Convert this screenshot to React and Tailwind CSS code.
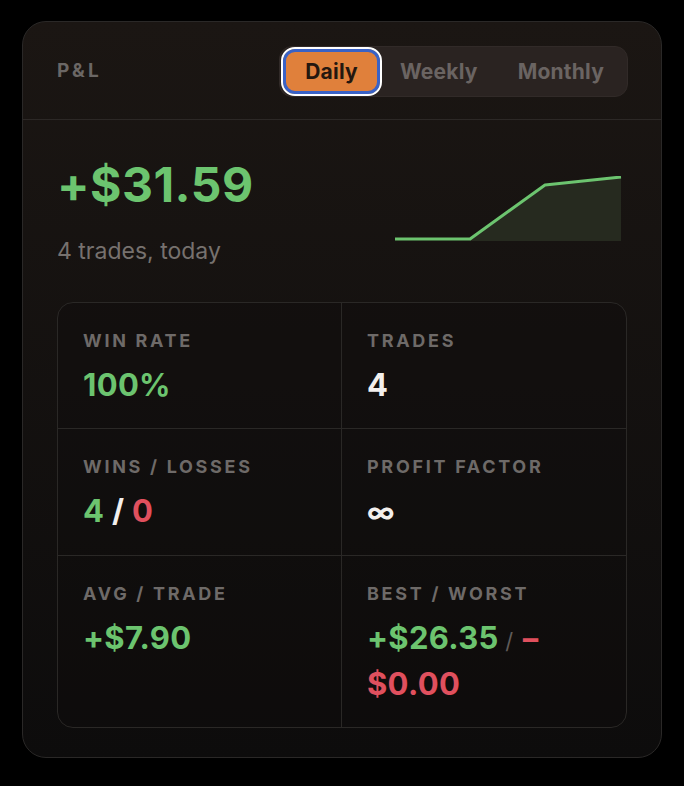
import React, { useState } from 'react'

const points = [
  [0, 62],
  [75, 62],
  [150, 8],
  [226, 0],
]

const Sparkline = () => {
  const line = points.map(([x, y]) => `${x},${y}`).join(' ')
  return (
    <svg width="232" height="66" viewBox="-3 -1 232 66" className="mt-[15px]">
      <polygon points="75,62 150,8 226,0 226,64 75,64" fill="#262a1f" />
      <polyline points={line} fill="none" stroke="#6cc46f" strokeWidth="3" strokeLinejoin="round" />
    </svg>
  )
}

const Stat = ({ label, children, className = '' }) => (
  <div className={`px-[25px] pt-[26px] pb-[20px] ${className}`}>
    <div className="text-[18px] leading-[24px] font-bold tracking-[0.15em] text-[#6e6a68] uppercase">{label}</div>
    <div className="mt-[9px] text-[31px] leading-[46px] font-bold tracking-[0.01em]">{children}</div>
  </div>
)

export default function App() {
  const [range, setRange] = useState('Daily')
  const tabs = ['Daily', 'Weekly', 'Monthly']

  return (
    <div className="min-h-[786px] bg-black pt-[21px] pl-[22px]" style={{ fontFamily: 'Inter, "Noto Sans", sans-serif' }}>
      <div className="w-[640px] h-[737px] rounded-[24px] border border-[#2a2827] bg-gradient-to-b from-[#1b1613] to-[#0d0c0c] overflow-hidden">
        {/* Header */}
        <div className="flex items-center justify-between pl-[34px] pr-[33px] pt-[2px] h-[98px] border-b border-[#2c2826]">
          <span className="text-[19px] font-bold tracking-[0.17em] text-[#6b6765]">P&amp;L</span>
          <div className="flex items-center h-[51px] rounded-[13px] bg-[#2a2321] border border-[#312a28] px-[3px]">
            {tabs.map((t) =>
              t === range ? (
                <button
                  key={t}
                  onClick={() => setRange(t)}
                  className="h-[45px] px-[19px] rounded-[12px] bg-[#e0803b] text-[#24170f] text-[21px] font-bold tracking-[0.01em] border-[3px] border-[#3a62c6] outline outline-2 outline-white"
                >
                  {t}
                </button>
              ) : (
                <button
                  key={t}
                  onClick={() => setRange(t)}
                  className="h-[45px] px-[20px] rounded-[12px] text-[#6a6462] text-[21px] font-bold tracking-[0.01em]"
                >
                  {t}
                </button>
              )
            )}
          </div>
        </div>

        {/* Summary */}
        <div className="flex items-start justify-between pl-[34px] pr-[37px] pt-[41px]">
          <div>
            <div className="text-[48px] leading-[48px] font-bold tracking-[0.01em] text-[#6cc46f]">+$31.59</div>
            <div className="mt-[28px] text-[23px] leading-[28px] text-[#76716e]">4 trades, today</div>
          </div>
          <Sparkline />
        </div>

        {/* Stats grid */}
        <div className="mx-[34px] mt-[37px] grid grid-cols-2 rounded-[16px] border border-[#2a2826] bg-[#0f0d0c]/40">
          <Stat label="Win Rate" className="border-r border-b border-[#2a2826]">
            <span className="text-[#6cc46f]">100%</span>
          </Stat>
          <Stat label="Trades" className="border-b border-[#2a2826]">
            <span className="text-[#f2efed]">4</span>
          </Stat>
          <Stat label="Wins / Losses" className="border-r border-b border-[#2a2826]">
            <span className="text-[#6cc46f]">4</span>
            <span className="text-[#f2efed]"> / </span>
            <span className="text-[#e0505e]">0</span>
          </Stat>
          <Stat label="Profit Factor" className="border-b border-[#2a2826]">
            <span className="text-[#f2efed] text-[28px]">∞</span>
          </Stat>
          <Stat label="Avg / Trade" className="border-r border-[#2a2826]">
            <span className="text-[#6cc46f]">+$7.90</span>
          </Stat>
          <Stat label="Best / Worst">
            <span className="text-[#6cc46f]">+$26.35</span>
            <span className="text-[#5f5b59] text-[22px] leading-none font-normal"> / </span>
            <span className="text-[#e0505e]">
              −<wbr />$0.00
            </span>
          </Stat>
        </div>
      </div>
    </div>
  )
}
